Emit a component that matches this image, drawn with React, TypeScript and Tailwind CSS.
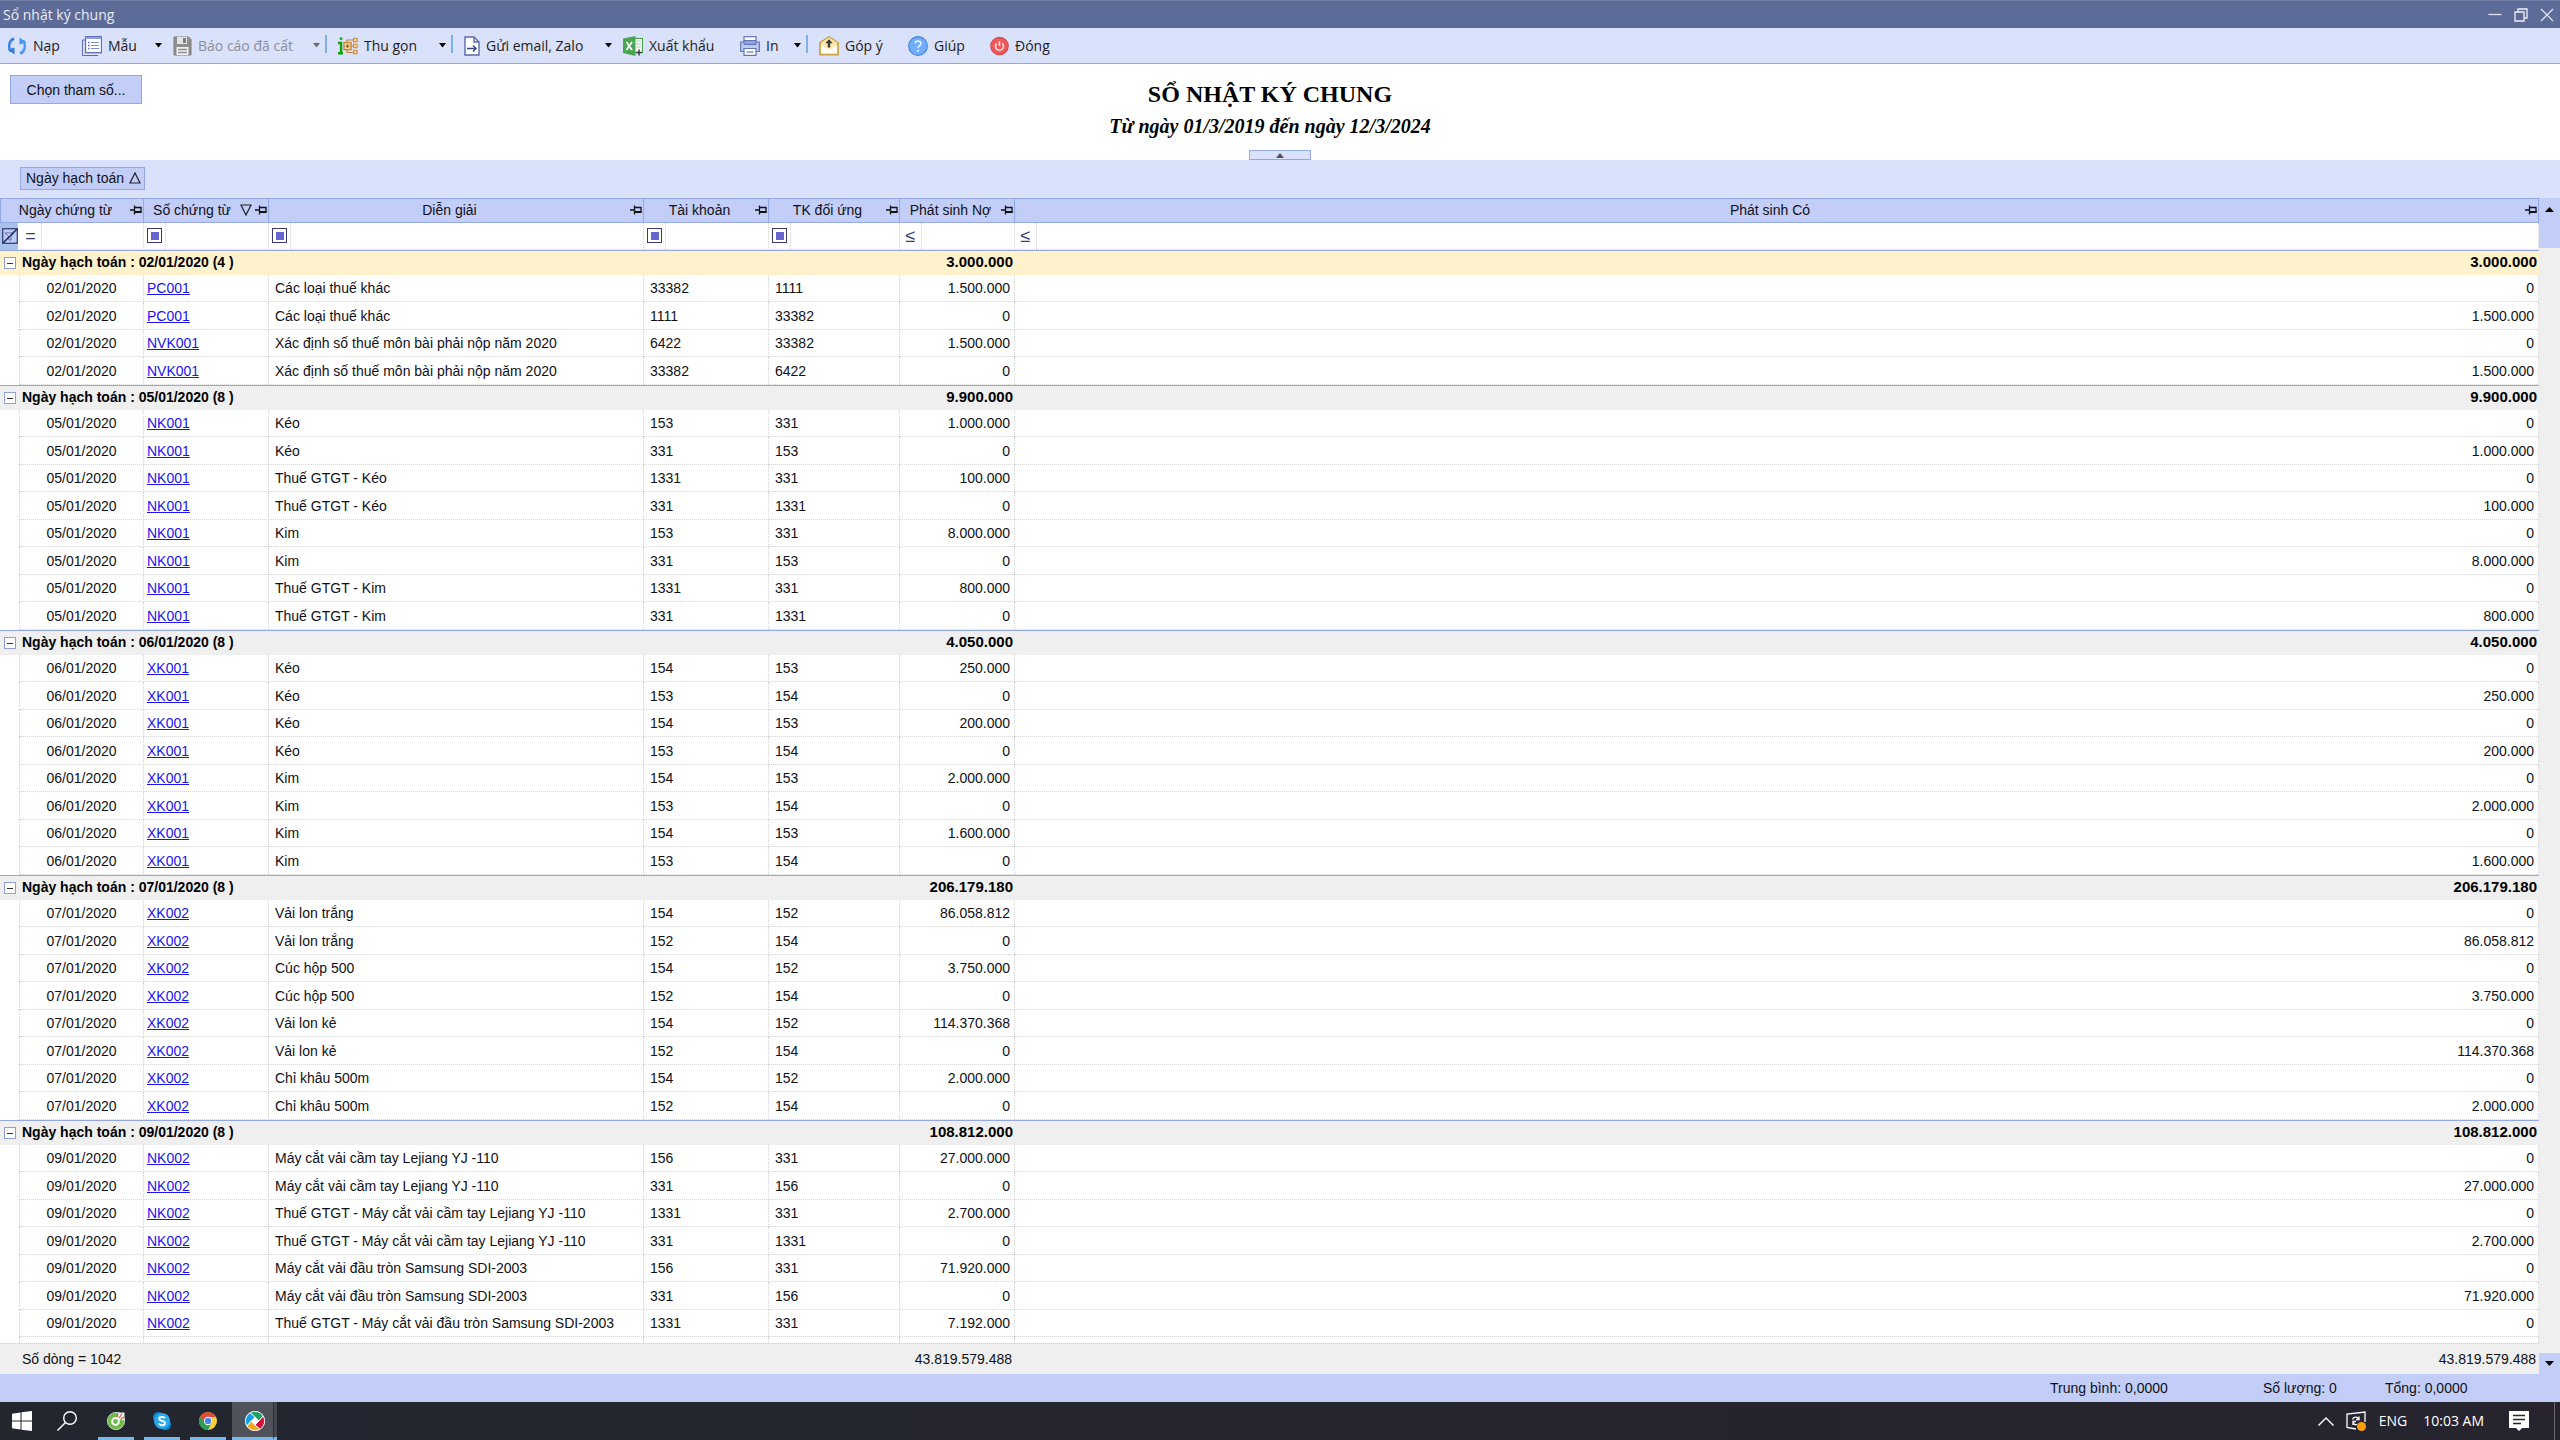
import type { ReactNode } from 'react'
import clsx from 'clsx'

type Entry = [code: string, text: string, account: string, contra: string, amount: string]

interface Group {
  date: string
  count: number
  total: string
  entries: Entry[]
}

// every entry is posted twice: once as debit, once mirrored as credit
const groups: Group[] = [
  {
    date: '02/01/2020',
    count: 4,
    total: '3.000.000',
    entries: [
      ['PC001', 'Các loại thuế khác', '33382', '1111', '1.500.000'],
      ['NVK001', 'Xác định số thuế môn bài phải nộp năm 2020', '6422', '33382', '1.500.000'],
    ],
  },
  {
    date: '05/01/2020',
    count: 8,
    total: '9.900.000',
    entries: [
      ['NK001', 'Kéo', '153', '331', '1.000.000'],
      ['NK001', 'Thuế GTGT - Kéo', '1331', '331', '100.000'],
      ['NK001', 'Kim', '153', '331', '8.000.000'],
      ['NK001', 'Thuế GTGT - Kim', '1331', '331', '800.000'],
    ],
  },
  {
    date: '06/01/2020',
    count: 8,
    total: '4.050.000',
    entries: [
      ['XK001', 'Kéo', '154', '153', '250.000'],
      ['XK001', 'Kéo', '154', '153', '200.000'],
      ['XK001', 'Kim', '154', '153', '2.000.000'],
      ['XK001', 'Kim', '154', '153', '1.600.000'],
    ],
  },
  {
    date: '07/01/2020',
    count: 8,
    total: '206.179.180',
    entries: [
      ['XK002', 'Vải lon trắng', '154', '152', '86.058.812'],
      ['XK002', 'Cúc hộp 500', '154', '152', '3.750.000'],
      ['XK002', 'Vải lon kẻ', '154', '152', '114.370.368'],
      ['XK002', 'Chỉ khâu 500m', '154', '152', '2.000.000'],
    ],
  },
  {
    date: '09/01/2020',
    count: 8,
    total: '108.812.000',
    entries: [
      ['NK002', 'Máy cắt vải cầm tay Lejiang YJ -110', '156', '331', '27.000.000'],
      ['NK002', 'Thuế GTGT - Máy cắt vải cầm tay Lejiang YJ -110', '1331', '331', '2.700.000'],
      ['NK002', 'Máy cắt vải đầu tròn Samsung SDI-2003', '156', '331', '71.920.000'],
      ['NK002', 'Thuế GTGT - Máy cắt vải đầu tròn Samsung SDI-2003', '1331', '331', '7.192.000'],
    ],
  },
]

const VISIBLE_IN_LAST = 7

function toRows(entries: Entry[]) {
  return entries.flatMap(([code, text, account, contra, amount]) => [
    { code, text, account, contra, debit: amount, credit: '0' },
    { code, text, account: contra, contra: account, debit: '0', credit: amount },
  ])
}

/* ---------- toolbar icons ---------- */

function RefreshIcon() {
  return (
    <svg width="20" height="20" viewBox="0 0 20 20" fill="none" aria-hidden="true">
      <path d="M7 2.5C2.5 4.5 1 10 4 15.5" stroke="#2f7de0" strokeWidth="3" />
      <path d="M0.5 13.5L7.5 18.5V11.5Z" fill="#2f7de0" />
      <path d="M13 17.5C17.5 15.5 19 10 16 4.5" stroke="#4a96ee" strokeWidth="3" />
      <path d="M19.5 6.5L12.5 1.5V8.5Z" fill="#4a96ee" />
      <path d="M6 4.5C3.5 6.5 2.8 10 4 13M14 15.5C16.5 13.5 17.2 10 16 7" stroke="#9fd0ff" strokeWidth="1" />
    </svg>
  )
}

function TemplateIcon() {
  return (
    <svg width="20" height="20" viewBox="0 0 20 20" fill="none" aria-hidden="true">
      <path d="M0.5 4V19.5H16M3 4H0.5" stroke="#5d6fb3" />
      <rect x="3.5" y="0.7" width="16" height="16" fill="#fff" stroke="#5d6fb3" strokeWidth="1.3" />
      <path d="M3.5 2H19.5" stroke="#8fa0d6" strokeWidth="2" />
      <path d="M6 6.5H7.5M6 9.5H7.5M6 12.5H7.5" stroke="#5d6fb3" strokeWidth="1.4" />
      <path d="M9 6.5H17M9 9.5H17M9 12.5H17" stroke="#7d8dc8" strokeWidth="1.2" />
    </svg>
  )
}

function DiskIcon() {
  return (
    <svg width="19" height="20" viewBox="0 0 19 20" fill="none" aria-hidden="true">
      <path d="M1 1H15.5L18 3.5V19H1Z" fill="#8e8e8e" stroke="#7d7d7d" />
      <rect x="4" y="1" width="10" height="7" fill="#e4e4e4" />
      <rect x="10" y="2" width="3" height="5" fill="#7d7d7d" />
      <rect x="3.5" y="11" width="12" height="8" fill="#f1f1f1" />
      <path d="M5 13.5H14M5 16.5H14" stroke="#8e8e8e" strokeWidth="1.3" />
    </svg>
  )
}

function CollapseIcon() {
  return (
    <svg width="20" height="18" viewBox="0 0 20 18" fill="none" aria-hidden="true">
      <path d="M1.8 1.6H4.4M0 6H3.1V17M0 16.2H5" stroke="#12a012" strokeWidth="2.4" />
      <path d="M9 9H18M9 5.5V3H16M9 12.5V15.5H16" stroke="#c7873c" strokeWidth="1.2" />
      <rect x="6" y="5.6" width="7" height="7" fill="#ffe3ae" stroke="#c7873c" strokeWidth="1.4" />
      <path d="M9.5 7.2V11M7.6 9.1H11.4" stroke="#9a5f1f" strokeWidth="1.4" />
      <rect x="15.5" y="1.4" width="3.6" height="3.4" fill="#ffd79a" stroke="#c7873c" />
      <rect x="15.5" y="7.3" width="3.6" height="3.4" fill="#ffd79a" stroke="#c7873c" />
      <rect x="15.5" y="13.4" width="3.6" height="3.4" fill="#ffd79a" stroke="#c7873c" />
    </svg>
  )
}

function SendIcon() {
  return (
    <svg width="16" height="20" viewBox="0 0 16 20" fill="none" aria-hidden="true">
      <path d="M1 1H10L15 6V19H1Z" fill="#fff" stroke="#5a6aa8" strokeWidth="1.4" />
      <path d="M10 1V6H15" stroke="#5a6aa8" strokeWidth="1.4" />
      <path d="M3 12.5H12M9 9.5L12 12.5L9 15.5" stroke="#34457f" strokeWidth="1.4" />
    </svg>
  )
}

function ExcelIcon() {
  return (
    <svg width="20" height="20" viewBox="0 0 20 20" fill="none" aria-hidden="true">
      <rect x="10.5" y="2.5" width="9" height="14" fill="#fff" stroke="#3f9c47" />
      <path d="M13 5H18M13 8H18M13 11H18" stroke="#9fcfa3" />
      <path d="M0 2.5L12.5 0V20L0 17Z" fill="#4aa653" />
      <path d="M3.5 6L9 14M9 6L3.5 14" stroke="#fff" strokeWidth="1.8" />
      <path d="M16 13.5V19.5M13 16.5H19" stroke="#33403a" strokeWidth="1.5" />
    </svg>
  )
}

function PrinterIcon() {
  return (
    <svg width="20" height="20" viewBox="0 0 20 20" fill="none" aria-hidden="true">
      <rect x="4" y="0.7" width="12" height="7" fill="#fff" stroke="#6274b8" strokeWidth="1.2" />
      <path d="M0.7 6H19.3V15.5H0.7Z" fill="#bccaf2" stroke="#6274b8" strokeWidth="1.2" />
      <path d="M4 4.5H16V8.5H4Z" fill="#8fa2e0" stroke="#6274b8" />
      <path d="M4 12.5H16V19.3H4Z" fill="#fff" stroke="#6274b8" strokeWidth="1.2" />
      <path d="M6.5 16H13.5" stroke="#6274b8" strokeWidth="1.2" />
    </svg>
  )
}

function FeedbackIcon() {
  return (
    <svg width="20" height="20" viewBox="0 0 20 20" fill="none" aria-hidden="true">
      <path d="M1 6.5L10 0.8L19 6.5V18.5H1Z" fill="#ffe9a8" stroke="#c9a13f" strokeWidth="1.3" />
      <path d="M1.6 9L10 13.5L18.4 9V18H1.6Z" fill="#fffdf5" />
      <path d="M10 11.5V5.5" stroke="#3b3b3b" strokeWidth="2.4" />
      <path d="M6.3 7.2L10 3.2L13.7 7.2Z" fill="#3b3b3b" />
      <path d="M1 6.5V18.5H19V6.5" stroke="#c9a13f" strokeWidth="1.3" />
    </svg>
  )
}

function HelpIcon() {
  return (
    <svg width="20" height="20" viewBox="0 0 20 20" fill="none" aria-hidden="true">
      <circle cx="10" cy="10" r="9.3" fill="#73aefc" stroke="#4583d8" strokeWidth="1.2" />
      <path d="M7.2 7.6C7.2 4 12.9 4.2 12.9 7.4C12.9 9.6 10 9.6 10 12.2" stroke="#e6f2ff" strokeWidth="1.5" />
      <circle cx="10" cy="14.8" r="1" fill="#e6f2ff" />
    </svg>
  )
}

function PowerIcon() {
  return (
    <svg width="19" height="20" viewBox="0 0 19 20" fill="none" aria-hidden="true">
      <circle cx="9.5" cy="10" r="8.7" fill="#f0595c" stroke="#d8494c" strokeWidth="1.2" />
      <path d="M6.8 7.3A4 4 0 1 0 12.2 7.3M9.5 5V10" stroke="#ffe3e3" strokeWidth="1.5" />
    </svg>
  )
}

interface Tool {
  label: string
  icon: ReactNode
  width: string
  menu?: boolean
  divider?: boolean
  disabled?: boolean
}

const tools: Tool[] = [
  { label: 'Nạp', icon: <RefreshIcon />, width: 'w-[75px]' },
  { label: 'Mẫu', icon: <TemplateIcon />, width: 'w-[91px]', menu: true },
  { label: 'Báo cáo đã cất', icon: <DiskIcon />, width: 'w-[165px]', menu: true, divider: true, disabled: true },
  { label: 'Thu gọn', icon: <CollapseIcon />, width: 'w-[126px]', menu: true, divider: true },
  { label: 'Gửi email, Zalo', icon: <SendIcon />, width: 'w-[159px]', menu: true },
  { label: 'Xuất khẩu', icon: <ExcelIcon />, width: 'w-[117px]' },
  { label: 'In', icon: <PrinterIcon />, width: 'w-[79px]', menu: true, divider: true },
  { label: 'Góp ý', icon: <FeedbackIcon />, width: 'w-[89px]' },
  { label: 'Giúp', icon: <HelpIcon />, width: 'w-[82px]' },
  { label: 'Đóng', icon: <PowerIcon />, width: 'w-[64px]' },
]

function Toolbar() {
  return (
    <div className="flex h-9 shrink-0 items-center border-b border-[#93a8e4] bg-[#dae1fb] pl-[7px] font-['Open_Sans',sans-serif] text-sm">
      {tools.map((tool) => (
        <div key={tool.label} className={clsx('flex h-full shrink-0 items-center', tool.width)}>
          <button
            disabled={tool.disabled}
            className={clsx('flex items-center gap-[6px] whitespace-nowrap', tool.disabled ? 'text-[#8c8f9b]' : 'text-[#1c1c24]')}
          >
            {tool.icon}
            {tool.label}
          </button>
          {tool.menu && (
            <button
              aria-label={`${tool.label}: tùy chọn`}
              disabled={tool.disabled}
              className={clsx('ml-auto', tool.disabled ? 'text-[#6b6b6b]' : 'text-black', tool.divider ? 'mr-[5px]' : 'mr-[11px]')}
            >
              <svg width="7" height="5" viewBox="0 0 7 5" fill="currentColor">
                <path d="M0 0H7L3.5 4.5Z" />
              </svg>
            </button>
          )}
          {tool.divider && <span className="mr-[11px] mb-1 h-[18px] w-[2px] bg-[#7fb0e6]" />}
        </div>
      ))}
    </div>
  )
}

/* ---------- title bar ---------- */

function TitleBar() {
  return (
    <header className="flex h-7 shrink-0 items-center border-t border-[#7281a8] bg-[#5d6b98] pr-[6px] pl-[3px] font-['Open_Sans',sans-serif] text-sm text-[#e8ebf5]">
      <h1>Sổ nhật ký chung</h1>
      <div className="ml-auto flex items-center gap-3">
        <button aria-label="Thu nhỏ">
          <svg width="14" height="14" viewBox="0 0 14 14" stroke="#dfe3f0" fill="none">
            <path d="M0.5 6.5H13.5" strokeWidth="1.3" />
          </svg>
        </button>
        <button aria-label="Khôi phục">
          <svg width="14" height="14" viewBox="0 0 14 14" stroke="#eef0f8" fill="none" strokeWidth="1.3">
            <path d="M1 4H10V13H1ZM4 4V1H13V10H10" />
          </svg>
        </button>
        <button aria-label="Đóng cửa sổ">
          <svg width="14" height="14" viewBox="0 0 14 14" stroke="#dfe3f0" fill="none" strokeWidth="1.3">
            <path d="M1 1L13 13M13 1L1 13" />
          </svg>
        </button>
      </div>
    </header>
  )
}

/* ---------- grid ---------- */

function PinIcon() {
  return (
    <svg width="12" height="10" viewBox="0 0 12 10" fill="none" stroke="#111" strokeWidth="1.3" aria-hidden="true">
      <path d="M0 5H4M4.5 0.5V9.5M4.5 2.5H11V7H4.5" />
      <path d="M5 7H11.5" strokeWidth="2" />
    </svg>
  )
}

function Columns() {
  return (
    <colgroup>
      <col className="w-[20px]" />
      <col className="w-[124px]" />
      <col className="w-[125px]" />
      <col className="w-[375px]" />
      <col className="w-[125px]" />
      <col className="w-[131px]" />
      <col className="w-[115px]" />
      <col />
    </colgroup>
  )
}

const headers = ['Ngày chứng từ', 'Số chứng từ', 'Diễn giải', 'Tài khoản', 'TK đối ứng', 'Phát sinh Nợ', 'Phát sinh Có']
const operators = ['=', 'box', 'box', 'box', 'box', '≤', '≤']

function HeaderRow() {
  return (
    <tr className="h-[25px] bg-[#c2cef8]">
      {headers.map((label, i) => (
        <th
          key={label}
          scope="col"
          colSpan={i === 0 ? 2 : 1}
          className="border-y border-r border-[#93a8e4] p-0 pr-px pb-[2px] font-normal first:border-l"
        >
          <div className="flex items-center">
            <span className="flex-1 whitespace-nowrap text-center">{label}</span>
            {i === 1 && (
              <svg className="mr-[3px]" width="12" height="12" viewBox="0 0 12 12" fill="none" stroke="#222" strokeWidth="1.2" aria-hidden="true">
                <path d="M1 1H11L6 11Z" />
              </svg>
            )}
            <PinIcon />
          </div>
        </th>
      ))}
    </tr>
  )
}

function FilterRow() {
  return (
    <tr className="h-[27px] bg-white">
      <td className="p-0">
        <button aria-label="Xóa bộ lọc" className="flex h-[27px] w-[18px] items-center justify-end bg-[#a9c2ea] pb-[2px]">
          <svg width="16" height="16" viewBox="0 0 16 16" fill="none">
            <rect x="0.7" y="0.7" width="14.6" height="14.6" fill="#b8cdf3" stroke="#3d3f73" strokeWidth="1.3" />
            <path d="M3 5H12L9 8.5V12H7V8.5Z" fill="#dfe8fb" stroke="#5f66b0" />
            <path d="M1 15L15 1" stroke="#2c2d5c" strokeWidth="1.6" />
          </svg>
        </button>
      </td>
      {operators.map((op, i) => (
        <td key={i} className="border-r border-b border-dotted border-[#d4d4d4] p-0">
          <div className="flex h-[26px]">
            <button
              aria-label={`Điều kiện lọc ${headers[i]}`}
              className="flex w-[22px] shrink-0 items-center justify-center border-r border-dotted border-[#d4d4d4] pb-px text-lg text-[#3b3a72]"
            >
              {op === 'box' ? (
                <span className="flex size-[15px] items-center justify-center border border-[#3b3a72] bg-white">
                  <span className="size-2 bg-[#6566cf]" />
                </span>
              ) : (
                op
              )}
            </button>
            <input aria-label={`Lọc ${headers[i]}`} className="w-full min-w-0 px-1 outline-none" />
          </div>
        </td>
      ))}
    </tr>
  )
}

const cell = 'border-r border-b border-dotted border-[#d4d4d4] p-0 whitespace-nowrap'

function GroupRows({ group, first, last }: { group: Group; first: boolean; last: boolean }) {
  const rows = toRows(group.entries)
  const shown = last ? rows.slice(0, VISIBLE_IN_LAST) : rows
  const band = first ? 'bg-[#fff2cc]' : 'bg-[#efefef]'
  return (
    <>
      <tbody>
        <tr className={clsx('h-[25px] text-[15px] font-bold text-black', band)}>
          <td className="border-t border-[#93a8e4] p-0">
            <button
              aria-label={`Thu gọn nhóm ${group.date}`}
              className="ml-1 flex size-3 items-center justify-center border border-[#8fa0d6] bg-white"
            >
              <span className="h-px w-[6px] bg-[#333]" />
            </button>
          </td>
          <th scope="rowgroup" colSpan={5} className="border-t border-[#93a8e4] p-0 pb-[3px] pl-[2px] text-left text-sm">
            Ngày hạch toán : {group.date} ({group.count} )
          </th>
          <td className="border-t border-[#93a8e4] p-0 pr-[2px] pb-[2px] text-right leading-5">{group.total}</td>
          <td className="border-t border-[#93a8e4] p-0 pr-[2px] pb-[2px] text-right leading-5">{group.total}</td>
        </tr>
      </tbody>
      <tbody>
        {shown.map((row, i) => (
          <tr key={i} className="odd:h-[27px] even:h-[28px]">
            <td className="border-r border-dotted border-[#d4d4d4] p-0" />
            <td className={clsx(cell, 'text-center')}>{group.date}</td>
            <td className={clsx(cell, 'pl-[3px]')}>
              <a href={`#${row.code}`} className="text-[#1a12f0] underline">
                {row.code}
              </a>
            </td>
            <td className={clsx(cell, 'pl-[6px]')}>{row.text}</td>
            <td className={clsx(cell, 'pl-[6px]')}>{row.account}</td>
            <td className={clsx(cell, 'pl-[6px]')}>{row.contra}</td>
            <td className={clsx(cell, 'pr-1 text-right')}>{row.debit}</td>
            <td className={clsx(cell, 'pr-1 text-right')}>{row.credit}</td>
          </tr>
        ))}
        {last && (
          <tr className="h-7">
            {headers.map((h) => (
              <td key={h} className="border-r border-dotted border-[#d4d4d4]" />
            ))}
            <td className="border-r border-dotted border-[#d4d4d4]" />
          </tr>
        )}
      </tbody>
    </>
  )
}

function ScrollBar() {
  return (
    <div className="flex w-[21px] shrink-0 flex-col bg-[#efefef]">
      <button aria-label="Cuộn lên" className="flex h-[23px] shrink-0 items-center justify-center bg-[#c2cef8]">
        <svg width="9" height="5" viewBox="0 0 9 5">
          <path d="M0 5H9L4.5 0Z" />
        </svg>
      </button>
      <div className="h-[27px] shrink-0 bg-[#c2cef8]" />
      <button aria-label="Cuộn xuống" className="mt-auto flex h-[21px] shrink-0 items-center justify-center bg-[#c2cef8]">
        <svg width="9" height="5" viewBox="0 0 9 5">
          <path d="M0 0H9L4.5 5Z" />
        </svg>
      </button>
    </div>
  )
}

function Grid() {
  return (
    <div className="flex min-h-0 flex-1">
      <div className="flex min-w-0 flex-1 flex-col">
        <div className="min-h-0 flex-1 overflow-hidden">
          <table className="w-full table-fixed border-separate border-spacing-0">
            <Columns />
            <thead>
              <HeaderRow />
              <FilterRow />
            </thead>
            {groups.map((group, i) => (
              <GroupRows key={group.date} group={group} first={i === 0} last={i === groups.length - 1} />
            ))}
          </table>
        </div>
        <table className="w-full shrink-0 table-fixed border-separate border-spacing-0 bg-[#efefef]">
          <Columns />
          <tbody>
            <tr className="h-[31px]">
              <td colSpan={6} className="border-t border-[#dedede] p-0 pl-[22px]">
                Số dòng = 1042
              </td>
              <td className="border-t border-[#dedede] p-0 pr-[3px] text-right">43.819.579.488</td>
              <td className="border-t border-[#dedede] p-0 pr-[3px] text-right">43.819.579.488</td>
            </tr>
          </tbody>
        </table>
      </div>
      <ScrollBar />
    </div>
  )
}

/* ---------- taskbar ---------- */

function CocCocIcon() {
  return (
    <svg width="18" height="18" viewBox="0 0 18 18" fill="none">
      <circle cx="9" cy="9" r="8.6" fill="#6dbb45" stroke="#dfeeda" strokeWidth="0.8" />
      <path d="M9.5 0.5H17.5V8.5L11.5 7.5Z" fill="#f3f3ee" />
      <path d="M10 5L11 1M12 6L15 1.5M13.5 7.5L17 5" stroke="#e2574c" strokeWidth="1.2" />
      <circle cx="8.5" cy="9.5" r="3.4" stroke="#fff" strokeWidth="2" />
    </svg>
  )
}

function SkypeIcon() {
  return (
    <svg width="18" height="18" viewBox="0 0 18 18">
      <circle cx="5.5" cy="5.5" r="5.5" fill="#1482c8" />
      <circle cx="12.5" cy="12.5" r="5.5" fill="#1482c8" />
      <circle cx="9" cy="9" r="8" fill="#28a8ea" />
      <path
        d="M12 6.3C11.5 4.6 6.2 4.3 6.2 6.8C6.2 9.4 12 8.2 12 11.2C12 13.9 6.6 13.7 6 11.6"
        fill="none"
        stroke="#fff"
        strokeWidth="1.9"
      />
    </svg>
  )
}

function ChromeIcon() {
  return (
    <svg width="18" height="18" viewBox="0 0 18 18">
      <circle cx="9" cy="9" r="9" fill="#fbd03b" />
      <path d="M1.2 4.5A9 9 0 0 0 9 18L12.6 11L9 9Z" fill="#2da04f" />
      <path d="M1.2 4.5A9 9 0 0 1 16.8 5H9L5.4 11Z" fill="#dd4b3e" />
      <circle cx="9" cy="9" r="4.2" fill="#fff" />
      <circle cx="9" cy="9" r="3.3" fill="#4a86ec" />
    </svg>
  )
}

function MisaIcon() {
  return (
    <svg width="20" height="20" viewBox="0 0 20 20" stroke="#fff" strokeWidth="0.8">
      <circle cx="10" cy="10" r="9.6" fill="#fff" />
      <path d="M5 1.8A9.6 9.6 0 0 1 18.2 5L14 10L10 6Z" fill="#1aa565" />
      <path d="M18.2 5A9.6 9.6 0 0 1 15 18.2L10 14L14 10Z" fill="#d0103a" />
      <path d="M15 18.2A9.6 9.6 0 0 1 1.8 15L6 10L10 14Z" fill="#fba61a" />
      <path d="M1.8 15A9.6 9.6 0 0 1 5 1.8L10 6L6 10Z" fill="#12a0e6" />
    </svg>
  )
}

const apps = [
  { name: 'Cốc Cốc', icon: <CocCocIcon /> },
  { name: 'Skype', icon: <SkypeIcon /> },
  { name: 'Chrome', icon: <ChromeIcon /> },
]

function Taskbar() {
  return (
    <footer className="flex h-[38px] shrink-0 items-stretch bg-linear-to-r from-[#22262f] to-[#27242e] font-['Open_Sans',sans-serif] text-sm text-white">
      <button aria-label="Start" className="flex w-11 items-center justify-center">
        <svg width="20" height="20" viewBox="0 0 20 20" fill="#fff">
          <path d="M0 2.8L8.5 1.5V9.5H0ZM9.5 1.3L20 0V9.5H9.5ZM0 10.5H8.5V18.5L0 17.2ZM9.5 10.5H20V20L9.5 18.7Z" />
        </svg>
      </button>
      <button aria-label="Tìm kiếm" className="mr-[3px] flex w-[46px] items-center justify-center">
        <svg width="20" height="20" viewBox="0 0 20 20" fill="none" stroke="#fff" strokeWidth="1.4">
          <circle cx="13" cy="7" r="6.3" />
          <path d="M8.5 11.5L0.5 19.5" />
        </svg>
      </button>
      {apps.map((app) => (
        <button key={app.name} aria-label={app.name} className="flex w-[46px] items-stretch justify-center px-[5px]">
          <span className="flex w-full items-center justify-center border-b-[3px] border-[#76b9ed] pt-[3px]">{app.icon}</span>
        </button>
      ))}
      <button
        aria-label="MISA"
        className="ml-px flex w-[41px] items-center justify-center border-b-[3px] border-[#76b9ed] bg-[#50535b] pt-[3px] pl-1"
      >
        <MisaIcon />
      </button>
      <span className="w-1 border-b-[3px] border-l border-b-[#76b9ed] border-l-[#2c2e36] bg-[#43464e]" />

      <div className="ml-auto flex items-center">
        <button aria-label="Biểu tượng ẩn" className="mr-3">
          <svg width="16" height="9" viewBox="0 0 16 9" fill="none" stroke="#fff" strokeWidth="1.4">
            <path d="M0.5 8.5L8 1L15.5 8.5" />
          </svg>
        </button>
        <button aria-label="Cập nhật" className="mr-[13px]">
          <svg width="20" height="20" viewBox="0 0 20 20" fill="none" stroke="#fff" strokeWidth="1.3">
            <path d="M10 18L1 16.5V3L19 1V11" />
            <path d="M6.5 8.5C7.5 5.5 11.5 5.5 12.5 8M13 5.5V8.5H10M7 14V10.5H10M7.3 12C8 13.5 9.5 14 11 13.5" />
            <circle cx="15.5" cy="15.5" r="4.5" fill="#ff9d0a" stroke="none" />
          </svg>
        </button>
        <span className="mr-4">ENG</span>
        <span className="mr-[25px]">10:03 AM</span>
        <button aria-label="Thông báo" className="mr-[25px]">
          <svg width="20" height="20" viewBox="0 0 20 20">
            <path d="M0 0H20V17H13L10 20L7 17H0Z" fill="#fff" />
            <path d="M4 4.5H16M4 8.5H16M4 12.5H12" stroke="#26242e" strokeWidth="1.3" />
          </svg>
        </button>
      </div>
      <span className="mr-[5px] w-px bg-[#6a6a72]" />
    </footer>
  )
}

export default function App() {
  return (
    <div className="flex h-screen flex-col overflow-hidden bg-white font-['Liberation_Sans',Arial,sans-serif] text-sm text-[#101018]">
      <TitleBar />
      <Toolbar />

      <section className="flex h-24 shrink-0 flex-col">
        <div className="grid flex-1 grid-cols-[1fr_auto_1fr] pr-[30px] pl-[10px]">
          <div className="pt-[11px]">
            <button className="h-[29px] w-[132px] border border-[#93a8e4] bg-[#c2cef8]">Chọn tham số...</button>
          </div>
          <div className="pt-[14px] text-center font-['Liberation_Serif','Times_New_Roman',serif] font-bold text-black">
            <h2 className="text-2xl leading-8">SỔ NHẬT KÝ CHUNG</h2>
            <p className="text-xl leading-8 italic">Từ ngày 01/3/2019 đến ngày 12/3/2024</p>
          </div>
        </div>
        <button
          aria-label="Thu gọn phần đầu"
          className="mx-auto flex h-[10px] w-[62px] items-center justify-center border border-[#93a8e4] bg-[#dae1fb]"
        >
          <svg width="8" height="5" viewBox="0 0 8 5" fill="#555">
            <path d="M0 5H8L4 0Z" />
          </svg>
        </button>
      </section>

      <div className="flex h-[38px] shrink-0 items-center bg-[#dae1fb] pl-5">
        <button className="mb-[2px] flex h-[23px] w-[125px] items-center justify-between border border-[#93a8e4] bg-[#c2cef8] pr-[3px] pl-[5px] whitespace-nowrap">
          Ngày hạch toán
          <svg width="12" height="12" viewBox="0 0 12 12" fill="none" stroke="#222" strokeWidth="1.2">
            <path d="M1 11H11L6 1Z" />
          </svg>
        </button>
      </div>

      <Grid />

      <div className="flex h-7 shrink-0 items-center justify-end bg-[#c2cef8] pr-[31px]">
        <span className="w-[213px]">Trung bình: 0,0000</span>
        <span className="w-[122px]">Số lượng: 0</span>
        <span className="w-36">Tổng: 0,0000</span>
      </div>

      <Taskbar />
    </div>
  )
}
